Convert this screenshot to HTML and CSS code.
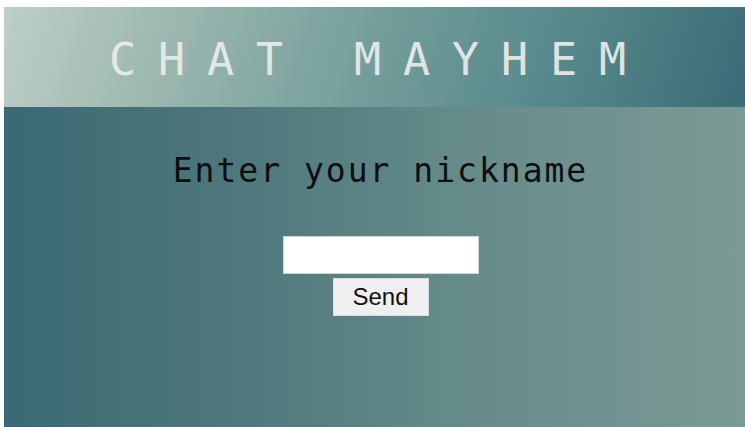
FILE: index.html
```html
<!DOCTYPE html>
<html lang="en">
<head>
<meta charset="utf-8">
<title>Chat Mayhem</title>
<link rel="stylesheet" href="styles.css">
</head>
<body>
  <div class="app">
    <header class="banner">
      <h1 class="banner-title">CHAT MAYHEM</h1>
    </header>
    <main class="login">
      <h2 class="login-title">Enter your nickname</h2>
      <form class="login-form" onsubmit="return false;">
        <input class="login-input" type="text" aria-label="Nickname">
        <button class="login-send" type="submit">Send</button>
      </form>
    </main>
  </div>
</body>
</html>
```

FILE: styles.css
```css
html, body {
  height: 100%;
}

body {
  margin: 0;
  padding: 7px 0 0 4px;
  box-sizing: border-box;
  background: #ffffff;
  font-family: "DejaVu Sans Mono", monospace;
}

.app {
  display: flex;
  flex-direction: column;
  height: 100%;
}

.banner {
  height: 100px;
  flex: none;
  box-sizing: border-box;
  padding: 6px 0 0 8px;
  background: linear-gradient(108deg, #bdcfc6 0%, #98b5ae 25%, #739d9a 50%, #55878b 75%, #3b6b75 100%);
  text-align: center;
}

.banner-title {
  margin: 0;
  font-size: 45px;
  font-weight: normal;
  line-height: 94px;
  letter-spacing: 21.9px;
  color: rgba(236, 238, 235, 0.92);
}

.login {
  flex: 1;
  display: flex;
  flex-direction: column;
  align-items: center;
  padding-left: 12px;
  background: linear-gradient(to right, #3b6973 0%, #4d777c 30%, #648a89 60%, #7c9a95 100%);
}

.login-title {
  margin: 44px 0 0;
  font-size: 33px;
  font-weight: normal;
  line-height: 40px;
  letter-spacing: 2px;
  color: #0c0e10;
}

.login-form {
  display: flex;
  flex-direction: column;
  align-items: center;
  gap: 4px;
  margin-top: 45px;
}

.login-input {
  width: 196px;
  height: 38px;
  box-sizing: border-box;
  margin: 0;
  border: 1px solid #d4d4d4;
  background: #ffffff;
  padding: 0 6px;
  font: 18px "Liberation Sans", Arial, sans-serif;
}

.login-send {
  width: 96px;
  height: 38px;
  box-sizing: border-box;
  margin: 0;
  padding: 0;
  border: 1px solid #dcdcdc;
  background: #efefef;
  color: #111111;
  font: 24px "Liberation Sans", Arial, sans-serif;
}
```
